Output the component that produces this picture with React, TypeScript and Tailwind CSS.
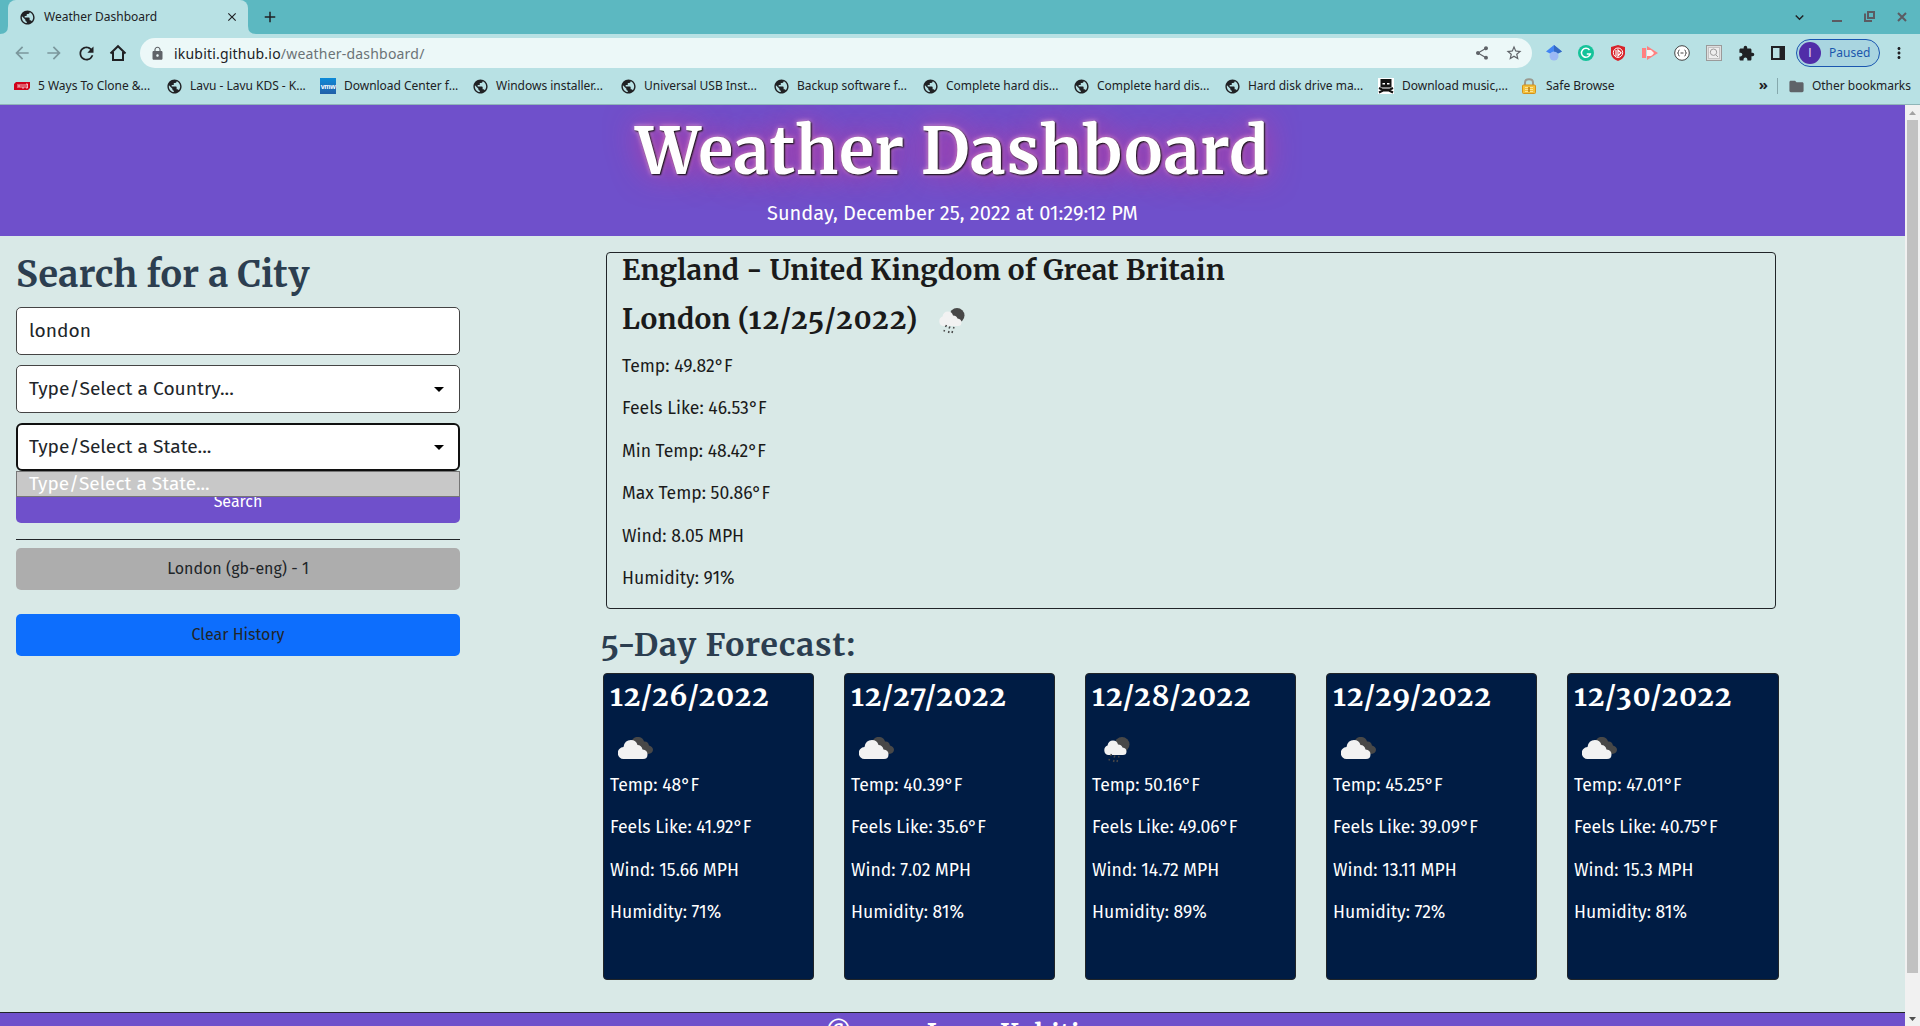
import type { ReactNode } from "react";
import {
  MdArrowBack, MdArrowForward, MdRefresh, MdLock, MdShare, MdStarBorder,
  MdExtension, MdFolder, MdPublic, MdClose, MdAdd, MdExpandMore, MdMoreVert,
} from "react-icons/md";

const Globe = () => <MdPublic className="size-[17px] text-[#202124]" />;

const HudIcon = () => (
  <svg width="16" height="8" viewBox="0 0 16 8">
    <path d="M2 0H16V6L14 8H0V2Z" fill="#d0021b" />
    <path d="M4 2v4M4 4h2M6 2v4M8 2v4h2V2M12 2v4h1.500V2H12" stroke="#fff" strokeWidth=".7" fill="none" />
  </svg>
);

const VmwIcon = () => (
  <span className="flex size-4 items-center justify-center bg-linear-to-b from-[#0a8bd8] to-[#1f5fa8] font-['Liberation_Sans'] text-[7px] leading-none font-bold tracking-[-0.4px] text-white">
    vmw
  </span>
);

const PirateIcon = () => (
  <svg width="16" height="16" viewBox="0 0 16 16">
    <rect width="16" height="16" fill="#fff" />
    <path d="M2.500 1h11v8.500h-11z" fill="#111" />
    <path d="M4.500 5h2.500v1.500H4.500zM9 5h2.500v1.500H9z" fill="#fff" />
    <path d="M1 10l3 1.500h8L15 10M1 14.500l4-2h6l4 2" stroke="#111" strokeWidth="2" fill="none" />
  </svg>
);

const PadlockIcon = () => (
  <svg width="14" height="16" viewBox="0 0 14 16">
    <path d="M3 8V4.500C3 0 11 0 11 4.500V8" fill="none" stroke="#9a9a90" strokeWidth="2" />
    <rect x=".5" y="7" width="13" height="8.500" rx="1" fill="#f3c13a" stroke="#d4921c" />
    <path d="M3 9.500h8M3 11.500h8M3 13.500h8" stroke="#fbe39a" />
    <path d="M7 9v5" stroke="#b87a10" strokeWidth="1.500" />
  </svg>
);

const bookmarks: { label: string; width: string; icon: ReactNode }[] = [
  { label: "5 Ways To Clone &...", width: "w-[152px]", icon: <HudIcon /> },
  { label: "Lavu - Lavu KDS - K...", width: "w-[154px]", icon: <Globe /> },
  { label: "Download Center f...", width: "w-[152px]", icon: <VmwIcon /> },
  { label: "Windows installer...", width: "w-[148px]", icon: <Globe /> },
  { label: "Universal USB Inst...", width: "w-[153px]", icon: <Globe /> },
  { label: "Backup software f...", width: "w-[149px]", icon: <Globe /> },
  { label: "Complete hard dis...", width: "w-[151px]", icon: <Globe /> },
  { label: "Complete hard dis...", width: "w-[151px]", icon: <Globe /> },
  { label: "Hard disk drive ma...", width: "w-[154px]", icon: <Globe /> },
  { label: "Download music,...", width: "w-[144px]", icon: <PirateIcon /> },
  { label: "Safe Browse", width: "w-[110px]", icon: <PadlockIcon /> },
];

function TabStrip() {
  return (
    <div className="flex h-[34px] shrink-0 items-center bg-[#5cb8c1] text-[#202124]">
      <svg width="8" height="34" className="shrink-0"><path d="M8 26V34H0Q8 34 8 26Z" fill="#b8e1e4" /></svg>
      <div className="flex h-full w-[240px] items-center rounded-t-lg bg-[#b8e1e4] pr-[9px] pl-[11px]">
        <Globe />
        <span className="ml-[8px] flex-1 text-[12px]">Weather Dashboard</span>
        <MdClose className="size-[14px]" />
      </div>
      <svg width="8" height="34" className="shrink-0"><path d="M0 26V34H8Q0 34 0 26Z" fill="#b8e1e4" /></svg>
      <MdAdd className="ml-[5px] size-[18px]" />
      <div className="ml-auto flex items-center text-[#5f5f66]">
        <MdExpandMore className="mr-[24px] size-[17px] text-[#202124]" />
        <span className="mt-[8px] mr-[22px] h-[2px] w-[10px] bg-[#5b5b62]" />
        <svg width="12" height="12" viewBox="0 0 12 12" className="mr-[21px]" fill="none" stroke="#5b5b62" strokeWidth="2">
          <path d="M4 1h6v6H4zM1 2.500V10h7" />
        </svg>
        <svg width="10" height="10" viewBox="0 0 10 10" className="mr-[13px]" stroke="#5b5b62" strokeWidth="2">
          <path d="M1 1l8 8M9 1L1 9" />
        </svg>
      </div>
    </div>
  );
}

function Extensions() {
  return (
    <div className="flex items-center gap-4">
      <svg width="16" height="16" viewBox="0 0 16 16">
        <circle cx="8" cy="11" r="4.500" fill="#9cb9f5" />
        <path d="M8 0L0 6.500 4 8.500Q8 4.500 12 8.500L16 6.500Z" fill="#4285f4" />
        <path d="M8 0L16 6.500 12 8.500Q10.500 6.500 8 6.500Z" fill="#356ac3" />
      </svg>
      <svg width="16" height="16" viewBox="0 0 16 16" fill="none">
        <circle cx="8" cy="8" r="8" fill="#15c39a" />
        <path d="M11.500 5A4.500 4.500 0 1 0 12.300 9H8.800" stroke="#fff" strokeWidth="1.500" />
      </svg>
      <svg width="16" height="16" viewBox="0 0 16 16" fill="none">
        <path d="M8 0l7 2v7q-1 5-7 7-6-2-7-7V2z" fill="#d8232a" />
        <circle cx="8" cy="7.700" r="4.700" stroke="#fff" />
        <path d="M6 5v6M8 5l3 2.700L8 11z" stroke="#fff" strokeWidth="1.200" />
      </svg>
      <svg width="16" height="16" viewBox="0 0 16 16">
        <path d="M0 3h4v10H0zM5 1l11 7-11 7z" fill="#ff8080" />
        <path d="M5 5h4l1.500 1.500L12 8l-1.500 2L9 11H5z" fill="#fff0f0" />
      </svg>
      <svg width="16" height="16" viewBox="0 0 16 16" fill="none" stroke="#444">
        <circle cx="8" cy="8" r="7.300" fill="#fff" />
        <path d="M5.500 5Q4.500 5 4.500 6.500T3.500 8Q4.500 8 4.500 9.500T5.500 11M10.500 5Q11.500 5 11.500 6.500T12.500 8Q11.500 8 11.500 9.500T10.500 11M6.500 8h3" />
      </svg>
      <svg width="16" height="16" viewBox="0 0 16 16" fill="none" stroke="#9a9a9a">
        <rect x=".5" y=".5" width="15" height="15" fill="#dedede" />
        <rect x="2.500" y="2.500" width="11" height="11" fill="#eee" stroke="#c4c4c4" />
        <circle cx="7.500" cy="7.200" r="3.200" /><path d="M10 10l2 2" />
      </svg>
      <MdExtension className="size-[17px] text-[#202124]" />
      <svg width="14" height="14" viewBox="0 0 14 14"><path d="M0 0h14v14H0zM2 2v10h6.500V2z" fill="#202124" fillRule="evenodd" /></svg>
    </div>
  );
}

function Toolbar() {
  return (
    <div className="flex h-[38px] shrink-0 items-center bg-[#b8e1e4] pl-[12px] text-[#202124]">
      <div className="flex items-center gap-[12px]">
        <MdArrowBack className="size-5 text-[#7b979c]" />
        <MdArrowForward className="size-5 text-[#7b979c]" />
        <MdRefresh className="size-[21px]" />
        <svg width="18" height="18" viewBox="0 0 18 18" fill="none" stroke="#202124" strokeWidth="2">
          <path d="M1.500 9.500L9 2.200l7.500 7.300M4 8v8h10V8" />
        </svg>
      </div>
      <div className="ml-[13px] flex h-[30px] w-[1392px] items-center rounded-full bg-[#ecf8f8] pr-[9px] pl-[10px]">
        <MdLock className="size-[15px] text-[#5f6368]" />
        <span className="ml-[9px] flex-1 text-[14px] tracking-[0.2px]">
          ikubiti.github.io<span className="text-[#6b7376]">/weather-dashboard/</span>
        </span>
        <MdShare className="size-4 text-[#5f6368]" />
        <MdStarBorder className="ml-[15px] size-[18px] text-[#5f6368]" />
      </div>
      <div className="ml-[14px]"><Extensions /></div>
      <div className="ml-[11px] flex h-[28px] w-[84px] items-center rounded-full border border-[#1a56b0] bg-[#a9d5e0] pl-[2px]">
        <span className="flex size-[22px] items-center justify-center rounded-full bg-[#512da8] font-['Roboto'] text-[12px] text-[#e3dcf2]">I</span>
        <span className="ml-[8px] text-[12px] text-[#1b57ad]">Paused</span>
      </div>
      <MdMoreVert className="ml-[10px] size-[18px]" />
    </div>
  );
}

function BookmarksBar() {
  return (
    <div className="flex h-[33px] shrink-0 items-center border-b border-[#8fb5b8] bg-[#b8e1e4] pb-[4px] pl-[14px] text-[12px] tracking-[-0.02px] whitespace-nowrap text-[#202124]">
      {bookmarks.map((b, i) => (
        <div key={i} className={"flex shrink-0 items-center " + b.width}>
          <span className="flex w-[24px] shrink-0 items-center">{b.icon}</span>
          <span>{b.label}</span>
        </div>
      ))}
      <span className="ml-auto pb-[3px] text-[15px] font-bold">»</span>
      <span className="ml-[9px] h-[16px] w-px bg-[#86a9ad]" />
      <MdFolder className="ml-[10px] size-[17px] text-[#5f6368]" />
      <span className="mr-[9px] ml-[7px]">Other bookmarks</span>
    </div>
  );
}

const CloudIcon = () => (
  <svg width="35" height="22" viewBox="0 0 35 22">
    <path d="M13 5Q16-1 21 0q4 .5 5 4.500 4-.5 5 4 4 1 4 4.500-.5 4-6 4L18 10Z" fill="#484848" />
    <path d="M6 22a6 6 0 0 1-.5-12Q6.500 3 13 3q5 0 6.500 5 4 .2 5 4.500 5 .5 5 5T25 22Z" fill="#f2f2f2" />
  </svg>
);

const RainIcon = () => (
  <svg width="27" height="26" viewBox="0 0 27 26">
    <circle cx="19" cy="7.500" r="7.500" fill="#484848" />
    <path d="M5 18a5 5 0 0 1-.5-9.500Q5.500 3.500 10 3.500q4 0 5 4 3.500 0 4.500 3 4 .5 4 4T20 18Z" fill="#f2f2f2" />
    <path d="M8.500 17l-1 2M12 18.500l-1 2M16 19l-.5 1.500M6.500 22l-.5 1.500M11 23l-.5 2M14.500 23l-.5 2" stroke="#484848" strokeWidth="1.500" />
  </svg>
);

const forecast = [
  { date: "12/26/2022", width: "w-[211px]", rain: false, lines: ["Temp: 48°F", "Feels Like: 41.92°F", "Wind: 15.66 MPH", "Humidity: 71%"] },
  { date: "12/27/2022", width: "w-[211px]", rain: false, lines: ["Temp: 40.39°F", "Feels Like: 35.6°F", "Wind: 7.02 MPH", "Humidity: 81%"] },
  { date: "12/28/2022", width: "w-[211px]", rain: true, lines: ["Temp: 50.16°F", "Feels Like: 49.06°F", "Wind: 14.72 MPH", "Humidity: 89%"] },
  { date: "12/29/2022", width: "w-[211px]", rain: false, lines: ["Temp: 45.25°F", "Feels Like: 39.09°F", "Wind: 13.11 MPH", "Humidity: 72%"] },
  { date: "12/30/2022", width: "w-[212px]", rain: false, lines: ["Temp: 47.01°F", "Feels Like: 40.75°F", "Wind: 15.3 MPH", "Humidity: 81%"] },
];

const current = ["Temp: 49.82°F", "Feels Like: 46.53°F", "Min Temp: 48.42°F", "Max Temp: 50.86°F", "Wind: 8.05 MPH", "Humidity: 91%"];

const Caret = () => (
  <svg width="10" height="5" viewBox="0 0 10 5"><path d="M0 0h10L5 5z" fill="#000" /></svg>
);

function SearchPanel() {
  return (
    <section className="w-[476px] shrink-0 p-4">
      <h2 className="mb-[7px] h-[48px] font-['Merriweather',serif] text-[36px] leading-[46px] font-bold tracking-[0.3px] text-[#2c3e50]">Search for a City</h2>
      <div className="w-[444px] text-[19.2px]">
        <div className="flex h-[48px] items-center rounded-[5px] border border-[#444] bg-white px-[12px]">london</div>
        <div className="mt-[10px] flex h-[48px] items-center justify-between rounded-[5px] border border-[#444] bg-white pr-[15px] pl-[12px]">
          Type/Select a Country...<Caret />
        </div>
        <div className="relative mt-[10px] flex h-[48px] items-center justify-between rounded-[6px] border-2 border-[#101010] bg-white pr-[14px] pl-[11px]">
          Type/Select a State...<Caret />
          <div className="absolute top-[46px] -left-[2px] z-10 flex h-[26px] w-[444px] items-center border border-[#767676] bg-[#c8c8c8] pl-[12px] text-[19px] text-white">
            Type/Select a State...
          </div>
        </div>
      </div>
      <div className="w-[444px] text-center text-[16px] leading-[42px]">
        <div className="mt-[10px] h-[42px] rounded-[5px] bg-[#6f50cb] text-white">Search</div>
        <div className="mt-[16px] h-px bg-[#212529]" />
        <div className="mt-[8px] h-[42px] rounded-[5px] bg-[#adadad]">London (gb-eng) - 1</div>
        <div className="mt-[24px] h-[42px] rounded-[5px] bg-[#0d6efd]">Clear History</div>
      </div>
    </section>
  );
}

function WeatherPanel() {
  return (
    <section className="ml-[125px] w-[1180px] pt-[16px]">
      <div className="ml-[5px] h-[357px] w-[1170px] rounded-[4px] border border-[#212529] pl-[15px] text-[#1a1a1a]">
        <h3 className="h-[49px] font-['Merriweather',serif] text-[28px] leading-[34px] font-bold tracking-[0.3px]">England - United Kingdom of Great Britain</h3>
        <div className="flex h-[52px] items-start">
          <h3 className="w-[298px] font-['Merriweather',serif] text-[28px] leading-[34px] font-bold tracking-[0.3px] whitespace-nowrap oldstyle-nums">
            London <span className="tracking-[1.45px]">(12/25/2022)</span>
          </h3>
          <span className="mt-[6px] ml-[18px]"><RainIcon /></span>
        </div>
        {current.map((l) => <p key={l} className="mb-[16px] text-[17.6px] leading-[26.4px]">{l}</p>)}
      </div>
      <h2 className="-ml-px mt-[17px] h-[47px] font-['Merriweather',serif] text-[32px] leading-[38px] font-bold tracking-[0.9px] text-[#2c3e50] oldstyle-nums">5-Day Forecast:</h2>
      <div className="ml-[2px] flex gap-[30px]">
        {forecast.map((d) => (
          <div key={d.date} className={"h-[307px] shrink-0 rounded-[4px] border border-[#212529] bg-[#001c44] pt-[6px] pl-[6px] text-white " + d.width}>
            <h3 className="h-[57px] font-['Merriweather',serif] text-[28px] leading-[33px] font-bold tracking-[1.3px] oldstyle-nums">{d.date}</h3>
            <div className={d.rain ? "h-[36px] pl-[11px]" : "h-[36px] pl-[8px]"}>{d.rain ? <RainIcon /> : <CloudIcon />}</div>
            {d.lines.map((l) => <p key={l} className="mb-[16px] text-[17.6px] leading-[26.4px]">{l}</p>)}
          </div>
        ))}
      </div>
    </section>
  );
}

function Scrollbar() {
  return (
    <div className="flex w-[15px] shrink-0 flex-col items-center bg-[#f1f1f1]">
      <svg width="15" height="15"><path d="M4 10L7.500 6 11 10Z" fill="#a3a3a3" /></svg>
      <div className="h-[853px] w-[11px] bg-[#c1c1c1]" />
      <svg width="15" height="15" className="mt-auto"><path d="M4 6L7.500 10 11 6Z" fill="#505050" /></svg>
    </div>
  );
}

export default function App() {
  return (
    <div className="flex h-[1026px] w-[1920px] flex-col overflow-hidden bg-[#d9e9e7] font-['Noto_Sans',sans-serif]">
      <TabStrip />
      <Toolbar />
      <BookmarksBar />
      <div className="flex h-[921px] overflow-hidden font-['Fira_Sans','Noto_Sans',sans-serif] text-[#212529]">
        <div className="flex w-[1905px] flex-col">
          <header className="h-[131px] shrink-0 overflow-hidden bg-[#6f50cb] text-center text-white">
            <h1 className="h-[93px] pt-[6px] font-['Merriweather',serif] text-[64px] leading-[80px] font-bold tracking-[0.75px] [text-shadow:1px_1px_2px_#000,0_0_32px_#e0308ce0,0_0_5px_#e8b8e0]">
              Weather Dashboard
            </h1>
            <p className="text-[20px] leading-[30px]">Sunday, December 25, 2022 at 01:29:12 PM</p>
          </header>
          <main className="flex h-[776px] shrink-0">
            <SearchPanel />
            <WeatherPanel />
          </main>
          <footer className="h-[60px] shrink-0 border-t border-[#212529] bg-[#6f50cb] text-center font-['Merriweather',serif] text-[25.5px] leading-[43px] font-bold tracking-[0.4px] text-white oldstyle-nums">
            © 2022 Isaac Kubiti
          </footer>
        </div>
        <Scrollbar />
      </div>
    </div>
  );
}
